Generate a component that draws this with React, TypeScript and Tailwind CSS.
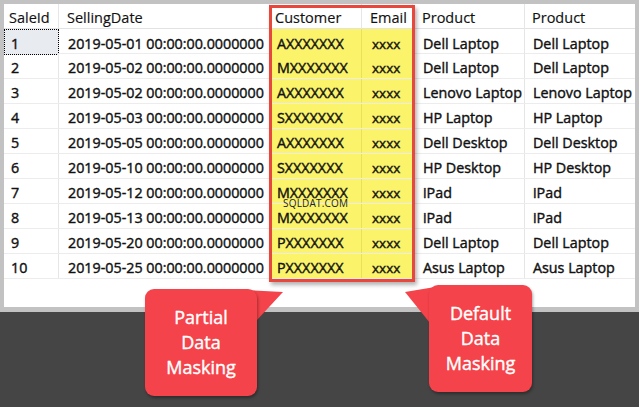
const rows = [
  ["1", "2019-05-01 00:00:00.0000000", "AXXXXXXX", "Dell Laptop"],
  ["2", "2019-05-02 00:00:00.0000000", "MXXXXXXX", "Dell Laptop"],
  ["3", "2019-05-02 00:00:00.0000000", "AXXXXXXX", "Lenovo Laptop"],
  ["4", "2019-05-03 00:00:00.0000000", "SXXXXXXX", "HP Laptop"],
  ["5", "2019-05-05 00:00:00.0000000", "AXXXXXXX", "Dell Desktop"],
  ["6", "2019-05-10 00:00:00.0000000", "SXXXXXXX", "HP Desktop"],
  ["7", "2019-05-12 00:00:00.0000000", "MXXXXXXX", "iPad"],
  ["8", "2019-05-13 00:00:00.0000000", "MXXXXXXX", "iPad"],
  ["9", "2019-05-20 00:00:00.0000000", "PXXXXXXX", "Dell Laptop"],
  ["10", "2019-05-25 00:00:00.0000000", "PXXXXXXX", "Asus Laptop"],
];

const grid = "grid grid-cols-[55px_211px_92px_51px_112px_110px]";
const cell = "flex items-center whitespace-nowrap pt-[3px]";

function Callout({ lines }: { lines: string[] }) {
  return (
    <div className="flex h-full w-full flex-col items-center justify-center rounded-[9px] bg-[#f4434a] text-[18px] leading-[25px] text-white shadow-[1px_2px_3px_rgba(0,0,0,0.35)] [-webkit-text-stroke:0.4px_#fff]">
      {lines.map((l) => (
        <span key={l}>{l}</span>
      ))}
    </div>
  );
}

export default function App() {
  return (
    <div
      className="relative h-[407px] w-[639px] overflow-hidden bg-[#454545] text-[#111]"
      style={{ fontFamily: '"Open Sans", "Noto Sans", sans-serif' }}
    >
      <div className="bg-[#c2c2c2] px-[4px] pt-[4px] pb-[5px]">
        <div className="relative h-[303px] bg-white">
          <div className={`${grid} h-[25px] border-b border-[#e2e2e2] text-[14.5px] [-webkit-text-stroke:0.15px_#111]`}>
            <div className={`${cell} border-r border-[#e6e6e6] pl-[5px]`}>SaleId</div>
            <div className={`${cell} border-r border-[#e6e6e6] pl-[8px]`}>SellingDate</div>
            <div className={`${cell} border-r border-[#e6e6e6] pl-[5px]`}>Customer</div>
            <div className={`${cell} border-r border-[#e6e6e6] pl-[8px]`}>Email</div>
            <div className={`${cell} border-r border-[#e6e6e6] pl-[9px]`}>Product</div>
            <div className={`${cell} pl-[7px]`}>Product</div>
          </div>
          {rows.map(([id, date, cust, prod], i) => (
            <div key={id} className={`${grid} h-[25px] border-b border-[#ececec] text-[14.3px] [-webkit-text-stroke:0.4px_#111]`}>
              <div
                className={
                  i === 0
                    ? `${cell} border border-dotted border-black bg-[#e8ecf1] pl-[6px]`
                    : `${cell} border-r border-[#e6e6e6] pl-[7px]`
                }
              >
                {id}
              </div>
              <div className={`${cell} border-r border-[#e6e6e6] pl-[9px]`}>{date}</div>
              <div className={`${cell} border-r border-[#e8e25a] bg-[#fbf46a] pl-[7px]`}>{cust}</div>
              <div className={`${cell} border-r border-[#e6e6e6] bg-[#fbf46a] pl-[10px] text-[13.5px]`}>xxxx</div>
              <div className={`${cell} border-r border-[#e6e6e6] pl-[10px]`}>{prod}</div>
              <div className={`${cell} pl-[8px]`}>{prod}</div>
            </div>
          ))}

          <div className="absolute top-[1px] left-[265px] h-[277px] w-[146px] border-[3px] border-[#e8473b] shadow-[2px_3px_4px_rgba(0,0,0,0.3)]" />
          <div className="absolute top-[194px] left-[279px] text-[10px] leading-none tracking-[0.2px] text-[#222]">SQLDAT.COM</div>
        </div>
      </div>

      <svg className="absolute top-0 left-0" width="639" height="407">
        <polygon points="244,290 283,292 257,320" fill="#f4434a" />
        <polygon points="441,286 405,292 430,323" fill="#f4434a" />
      </svg>
      <div className="absolute top-[289px] left-[145px] h-[107px] w-[112px]">
        <Callout lines={["Partial", "Data", "Masking"]} />
      </div>
      <div className="absolute top-[285px] left-[429px] h-[107px] w-[103px]">
        <Callout lines={["Default", "Data", "Masking"]} />
      </div>
    </div>
  );
}
